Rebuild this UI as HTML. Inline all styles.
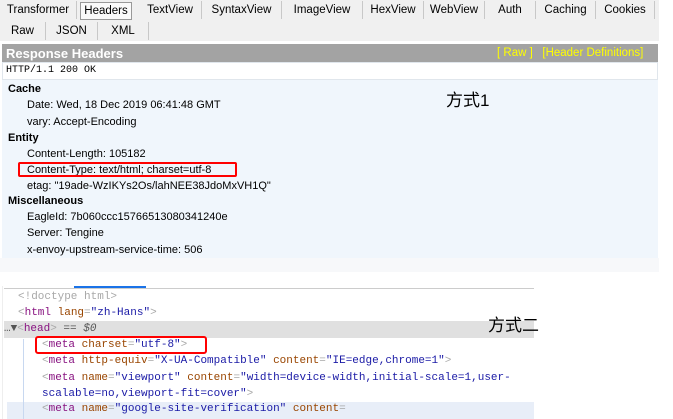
<html><head><style>
body{margin:0;width:673px;height:419px;background:#fff;position:relative;overflow:hidden;font-family:"Liberation Sans",Tahoma,sans-serif;}
.a{position:absolute;white-space:nowrap}
.tabs{position:absolute;left:0;top:0;width:659px;height:41px;background:#f0f0f0;}
.t{position:absolute;font-size:11.5px;color:#000;height:18px;line-height:18px;border-right:1px solid #c8c8c8;text-align:center}
.blue{position:absolute;left:2px;top:80px;width:656px;height:178px;background:#f0f6fc}
.f{font-size:11px;color:#000}
.b{font-weight:bold}
.c{font-family:"Liberation Mono",monospace;font-size:11px;color:#a8a8a8}
.tg{color:#881280}.at{color:#994500}.v{color:#1a1aa6}
</style></head><body>
<div class="tabs">
<div class="t" style="left:0;top:1px;width:76px">Transformer</div>
<div class="t" style="left:80px;top:2px;width:50px;background:#fafafa;border:1px solid #999;height:16px;line-height:17px">Headers</div>
<div class="t" style="left:139px;top:1px;width:62px">TextView</div>
<div class="t" style="left:202px;top:1px;width:79px">SyntaxView</div>
<div class="t" style="left:282px;top:1px;width:80px">ImageView</div>
<div class="t" style="left:363px;top:1px;width:60px">HexView</div>
<div class="t" style="left:424px;top:1px;width:60px">WebView</div>
<div class="t" style="left:485px;top:1px;width:50px">Auth</div>
<div class="t" style="left:536px;top:1px;width:59px">Caching</div>
<div class="t" style="left:596px;top:1px;width:58px">Cookies</div>
<div class="t" style="left:0;top:22px;width:45px">Raw</div>
<div class="t" style="left:46px;top:22px;width:51px">JSON</div>
<div class="t" style="left:98px;top:22px;width:50px">XML</div>
</div>
<div class="a" style="left:2px;top:44px;width:656px;height:18px;background:#a3a3a3"></div>
<div class="a" style="left:6px;top:45px;font-size:13px;font-weight:bold;color:#fff;line-height:17px">Response Headers</div>
<div class="a" style="left:497px;top:46px;font-size:11.5px;color:#ffff00;line-height:15px">[ Raw ]&nbsp;&nbsp; [Header Definitions]</div>
<div class="a" style="left:2px;top:62px;width:656px;height:18px;border:1px solid #e0e6ec;box-sizing:border-box;background:#fff"></div>
<div class="a" style="left:6px;top:65px;font-family:'Liberation Mono',monospace;font-size:10px">HTTP/1.1 200 OK</div>
<div class="blue"></div>
<div class="a f b" style="left:8px;top:83px">Cache</div>
<div class="a f" style="left:27px;top:99px">Date: Wed, 18 Dec 2019 06:41:48 GMT</div>
<div class="a f" style="left:27px;top:116px">vary: Accept-Encoding</div>
<div class="a f b" style="left:8px;top:132px">Entity</div>
<div class="a f" style="left:27px;top:148px">Content-Length: 105182</div>
<div class="a f" style="left:27px;top:164px">Content-Type: text/html; charset=utf-8</div>
<div class="a" style="left:18px;top:162px;width:219px;height:15px;border:2px solid #f00;box-sizing:border-box;border-radius:2px"></div>
<div class="a f" style="left:27px;top:180px">etag: "19ade-WzIKYs2Os/lahNEE38JdoMxVH1Q"</div>
<div class="a f b" style="left:8px;top:195px">Miscellaneous</div>
<div class="a f" style="left:27px;top:211px">EagleId: 7b060ccc15766513080341240e</div>
<div class="a f" style="left:27px;top:227px">Server: Tengine</div>
<div class="a f" style="left:27px;top:244px">x-envoy-upstream-service-time: 506</div>
<div class="a" style="left:446px;top:86px;font-size:17px;font-family:'Liberation Sans','Noto Sans CJK SC',sans-serif">方式1</div>
<div class="a" style="left:0;top:258px;width:659px;height:14px;background:#f7f8fa"></div>
<div class="a" style="left:2px;top:286px;width:538px;height:133px;background:#fff;border-left:1px solid #eee"></div>
<div class="a" style="left:4px;top:288px;width:530px;height:1px;background:#ccc"></div>
<div class="a" style="left:74px;top:286px;width:72px;height:2px;background:#1a73e8"></div>
<div class="a" style="left:4px;top:321px;width:530px;height:17px;background:#e0e0e0"></div>
<div class="a" style="left:7px;top:402px;width:527px;height:17px;background:#e8eef8"></div>
<div class="a" style="left:23px;top:339px;width:1px;height:80px;background:#c8d8f0"></div>
<div class="a c" style="left:18px;top:291px">&lt;!doctype html&gt;</div>
<div class="a c" style="left:18px;top:307px"><span>&lt;</span><span class="tg">html</span> <span class="at">lang</span>=<span class="v">"zh-Hans"</span>&gt;</div>
<div class="a c" style="left:4px;top:323px;color:#555">…▼<span style="color:#a8a8a8">&lt;</span><span class="tg">head</span><span style="color:#a8a8a8">&gt;</span> == <i>$0</i></div>
<div class="a c" style="left:42px;top:339px">&lt;<span class="tg">meta</span> <span class="at">charset</span>=<span class="v">"utf-8"</span>&gt;</div>
<div class="a" style="left:35px;top:336px;width:172px;height:18px;border:2px solid #f00;box-sizing:border-box;border-radius:3px"></div>
<div class="a c" style="left:42px;top:355px">&lt;<span class="tg">meta</span> <span class="at">http-equiv</span>=<span class="v">"X-UA-Compatible"</span> <span class="at">content</span>=<span class="v">"IE=edge,chrome=1"</span>&gt;</div>
<div class="a c" style="left:42px;top:372px">&lt;<span class="tg">meta</span> <span class="at">name</span>=<span class="v">"viewport"</span> <span class="at">content</span>=<span class="v">"width=device-width,initial-scale=1,user-</span></div>
<div class="a c" style="left:42px;top:388px"><span class="v">scalable=no,viewport-fit=cover"</span>&gt;</div>
<div class="a c" style="left:42px;top:403px">&lt;<span class="tg">meta</span> <span class="at">name</span>=<span class="v">"google-site-verification"</span> <span class="at">content</span>=</div>
<div class="a" style="left:488px;top:311px;font-size:17px;font-family:'Liberation Sans','Noto Sans CJK SC',sans-serif">方式二</div>
</body></html>
